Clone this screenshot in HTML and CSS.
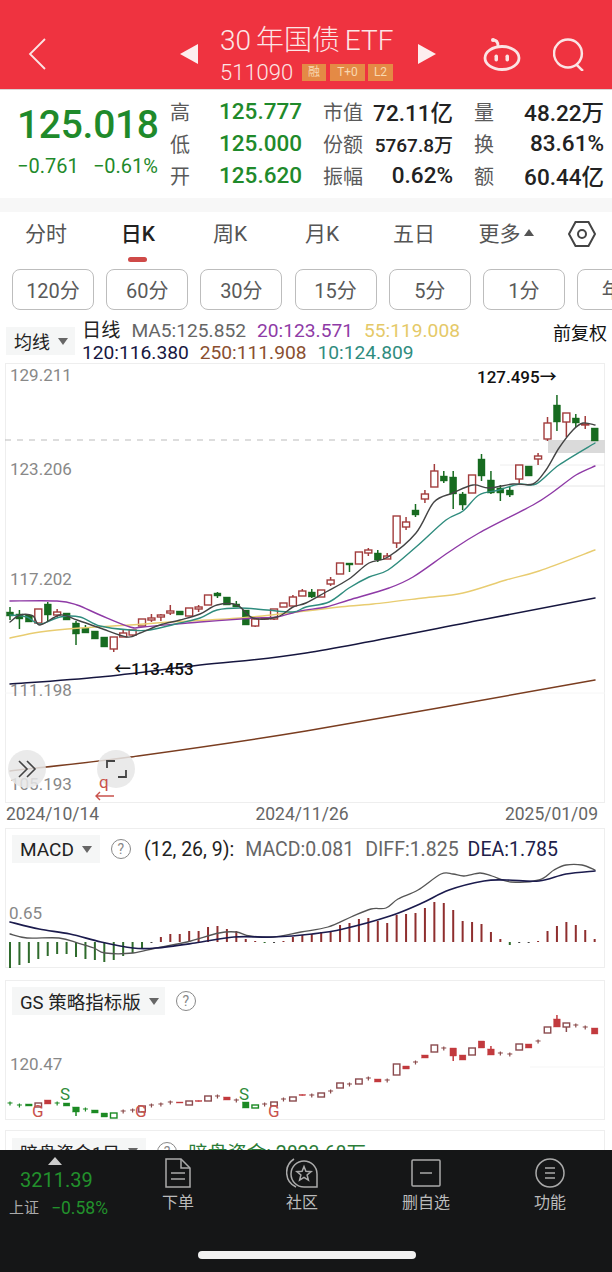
FILE: index.html
```html
<!DOCTYPE html>
<html lang="zh-CN">
<head>
  <meta charset="UTF-8" />
  <meta name="viewport" content="width=device-width, initial-scale=1.0"/>
  <title>30年国债ETF</title>
  <link rel="stylesheet" href="styles.css">
</head>
<body>
  <div class="page">
    <header class="topbar">
      <svg class="back" viewBox="0 0 18 32"><path d="M17 1 2 16l15 15"/></svg>
      <span class="tri tri-left"></span>
      <div class="title-block">
        <div class="title">30 年国债 ETF</div>
        <div class="subtitle">
          <span class="code">511090</span>
          <span class="badge badge-rong">融</span>
          <span class="badge badge-t">T+0</span>
          <span class="badge badge-l">L2</span>
        </div>
      </div>
      <span class="tri tri-right"></span>
      <svg class="robot" viewBox="0 0 38 34">
        <ellipse cx="19" cy="21" rx="17" ry="11.5"/>
        <path d="M15 9c0-4-2-6-5-6"/>
        <circle class="robot-dot" cx="10" cy="3" r="2"/>
        <rect class="robot-dot" x="11.500" y="17.500" width="3.500" height="7" rx="1.700"/>
        <rect class="robot-dot" x="22.500" y="17.500" width="3.500" height="7" rx="1.700"/>
      </svg>
      <svg class="search" viewBox="0 0 32 32"><circle cx="14.500" cy="15" r="13.500"/><path d="m23 26 6 6"/></svg>
    </header>

    <section class="quote">
      <div class="price-block">
        <div class="price">125.018</div>
        <div class="change"><span>−0.761</span><span>−0.61%</span></div>
      </div>
      <div class="stats">
        <div class="stat"><span class="stat-label">高</span><span class="stat-value green">125.777</span></div>
        <div class="stat"><span class="stat-label">市值</span><span class="stat-value">72.11亿</span></div>
        <div class="stat"><span class="stat-label">量</span><span class="stat-value">48.22万</span></div>
        <div class="stat"><span class="stat-label">低</span><span class="stat-value green">125.000</span></div>
        <div class="stat"><span class="stat-label">份额</span><span class="stat-value stat-small">5767.8万</span></div>
        <div class="stat"><span class="stat-label">换</span><span class="stat-value">83.61%</span></div>
        <div class="stat"><span class="stat-label">开</span><span class="stat-value green">125.620</span></div>
        <div class="stat"><span class="stat-label">振幅</span><span class="stat-value">0.62%</span></div>
        <div class="stat"><span class="stat-label">额</span><span class="stat-value">60.44亿</span></div>
      </div>
    </section>

    <nav class="tabs">
      <span class="tab">分时</span>
      <span class="tab active">日K</span>
      <span class="tab">周K</span>
      <span class="tab">月K</span>
      <span class="tab">五日</span>
      <span class="tab">更多<i class="more-arrow"></i></span>
      <span class="tab-setting">
        <svg viewBox="0 0 28 26"><path d="M7.500 1h13L27 13l-6.500 12h-13L1 13z"/><circle cx="14" cy="13" r="4"/></svg>
      </span>
    </nav>

    <div class="chips">
      <span class="chip">120分</span>
      <span class="chip">60分</span>
      <span class="chip">30分</span>
      <span class="chip">15分</span>
      <span class="chip">5分</span>
      <span class="chip">1分</span>
      <span class="chip">年K</span>
    </div>

    <div class="ma-row">
      <span class="tag ma-tag">均线<i class="caret"></i></span>
      <div class="ma-text">
        <div><span class="ma-name">日线</span><span class="ma5">MA5:125.852</span><span class="ma20">20:123.571</span><span class="ma55">55:119.008</span></div>
        <div><span class="ma120">120:116.380</span><span class="ma250">250:111.908</span><span class="ma10">10:124.809</span></div>
      </div>
      <span class="adjust">前复权</span>
    </div>

    <div class="main-chart">
      <svg id="mainChart" viewBox="5 363 600 440"></svg>
    </div>

    <div class="dates">
      <span>2024/10/14</span>
      <span>2024/11/26</span>
      <span>2025/01/09</span>
    </div>

    <section class="panel">
      <svg id="macdChart" class="panel-chart" viewBox="5 828 600 140"></svg>
      <div class="panel-head">
        <span class="tag">MACD<i class="caret"></i></span>
        <span class="help">?</span>
        <span class="macd-params">(12, 26, 9):</span>
        <span class="macd-val">MACD:0.081</span>
        <span class="macd-val">DIFF:1.825</span>
        <span class="macd-dea">DEA:1.785</span>
      </div>
    </section>

    <section class="panel panel-gs">
      <svg id="gsChart" class="panel-chart" viewBox="5 5 600 140"></svg>
      <div class="panel-head">
        <span class="tag tag-gs">GS 策略指标版<i class="caret"></i></span>
        <span class="help">?</span>
      </div>
    </section>

    <section class="panel panel-dark">
      <div class="panel-head">
        <span class="tag tag-dark">暗盘资金1日<i class="caret"></i></span>
        <span class="help">?</span>
        <span class="dark-val">暗盘资金: 2823.68万</span>
      </div>
    </section>

    <footer class="bottombar">
      <div class="index">
        <span class="index-arrow"></span>
        <div class="index-price">3211.39</div>
        <div class="index-line"><span class="index-name">上证</span><span class="index-change">−0.58%</span></div>
      </div>
      <div class="nav-item">
        <svg viewBox="0 0 26 32" width="26" height="32"><path d="M1 2h15l9 9v19H1z"/><path d="M16 2v9h9M6 16h14M6 22h14"/></svg>
        <span>下单</span>
      </div>
      <div class="nav-item">
        <svg viewBox="0 0 32 32" width="32" height="32"><path d="M31 30H18a13 13 0 1 1 13-13z"/><path d="M8 2a16 16 0 0 0 2 28"/><path d="M18 9.500l1.900 4.800 5.200.4-4 3.300 1.300 5.100-4.400-2.800-4.400 2.800 1.300-5.100-4-3.300 5.200-.4z"/></svg>
        <span>社区</span>
      </div>
      <div class="nav-item">
        <svg viewBox="0 0 30 32" width="30" height="32"><rect x="1" y="3" width="28" height="26" rx="1"/><path d="M9 16h12"/></svg>
        <span>删自选</span>
      </div>
      <div class="nav-item">
        <svg viewBox="0 0 30 32" width="30" height="32"><circle cx="15" cy="16" r="14"/><path d="M10 11h10M10 16h10M10 21h10"/></svg>
        <span>功能</span>
      </div>
      <div class="home-pill"></div>
    </footer>
  </div>

  <script src="charts.js"></script>
</body>
</html>
```

FILE: styles.css
```css
* {
  box-sizing: border-box;
}

body {
  margin: 0;
  background: #fff;
  font-family: Roboto, 'Noto Sans CJK SC', sans-serif;
  color: #222;
}

.page {
  position: relative;
  width: 612px;
  height: 1272px;
  overflow: hidden;
}

.green { color: #1f8a2b; }

/* top bar */
.topbar {
  display: flex;
  align-items: center;
  height: 90px;
  padding-top: 19px;
  background: #ef3340;
  border-bottom: 1px solid #d9d5d5;
  color: #fce6e6;
}

.topbar svg {
  flex: none;
  fill: none;
  stroke: #fbe4e4;
}

.back {
  width: 18px;
  height: 32px;
  margin-left: 28px;
  stroke-width: 1.800;
}

.tri {
  flex: none;
  width: 0;
  height: 0;
  border-top: 10px solid transparent;
  border-bottom: 10px solid transparent;
}

.tri-left {
  margin-left: 134px;
  border-right: 18px solid #fdeeee;
}

.tri-right {
  margin-left: 18px;
  border-left: 18px solid #fdeeee;
}

.title-block {
  width: 180px;
  margin-left: 22px;
}

.title {
  font-size: 28px;
  line-height: 36px;
  font-weight: 300;
  white-space: nowrap;
  word-spacing: -2px;
}

.subtitle {
  display: flex;
  align-items: center;
  height: 26px;
}

.code {
  width: 82px;
  font-size: 22px;
  font-weight: 300;
}

.badge {
  height: 17px;
  margin-right: 3px;
  background: #e48a45;
  color: #f8d8b0;
  font-size: 12px;
  line-height: 17px;
  text-align: center;
}

.badge-rong { width: 24px; margin-right: 4px; }
.badge-t { width: 35px; }
.badge-l { width: 25px; }

.robot {
  width: 38px;
  height: 34px;
  margin-left: 47px;
  stroke-width: 2.800;
}

.topbar .robot-dot {
  fill: #fbe4e4;
  stroke: none;
}

.search {
  width: 33px;
  height: 33px;
  margin-left: 32px;
  stroke-width: 2.400;
}

/* quote */
.quote {
  display: flex;
  height: 122px;
  border-bottom: 14px solid #f7f7f7;
}

.price-block {
  width: 170px;
  padding: 12px 12px 0 17px;
  color: #1f8a2b;
}

.price {
  font-size: 39px;
  font-weight: 500;
  line-height: 46px;
  letter-spacing: -0.300px;
}

.change {
  display: flex;
  justify-content: space-between;
  margin-top: 6px;
  font-size: 20px;
  line-height: 24px;
}

.stats {
  display: grid;
  grid-template-columns: 132px 130px 130px;
  grid-auto-rows: 32px;
  column-gap: 21px;
  padding-top: 5px;
}

.stat {
  display: flex;
  justify-content: space-between;
  align-items: center;
  white-space: nowrap;
}

.stat-label {
  font-size: 20px;
  color: #5a5a5a;
}

.stat-value {
  font-size: 22.500px;
  font-weight: 500;
}

.stat-small {
  font-size: 19px;
}

/* tabs */
.tabs {
  display: flex;
  height: 50px;
}

.tab {
  position: relative;
  display: flex;
  align-items: center;
  justify-content: center;
  width: 92px;
  padding-bottom: 10px;
  font-size: 21px;
  color: #555;
}

.tab.active {
  color: #222;
  font-weight: 500;
}

.tab.active::after {
  content: "";
  position: absolute;
  left: 36px;
  bottom: 0;
  width: 19px;
  height: 5px;
  border-radius: 3px;
  background: #cf4a48;
}

.more-arrow {
  width: 0;
  height: 0;
  margin-left: 3px;
  border-left: 5px solid transparent;
  border-right: 5px solid transparent;
  border-bottom: 7px solid #555;
}

.tab-setting {
  display: flex;
  justify-content: center;
  width: 60px;
  padding-top: 9px;
}

.tab-setting svg {
  width: 28px;
  height: 26px;
  fill: none;
  stroke: #444;
  stroke-width: 2;
}

/* period chips */
.chips {
  display: flex;
  gap: 12.200px;
  padding: 7px 0 0 12px;
  height: 48px;
}

.chip {
  flex: none;
  display: flex;
  align-items: center;
  justify-content: center;
  width: 82px;
  height: 41px;
  border: 1px solid #bdbdbd;
  border-radius: 8px;
  font-size: 20px;
  color: #5a5a5a;
}

/* moving average legend */
.ma-row {
  display: flex;
  height: 53px;
  padding: 10px 5px 0 6px;
}

.tag {
  display: inline-flex;
  align-items: center;
  height: 28px;
  padding: 0 8px;
  background: #f5f6f6;
  font-size: 19px;
  color: #222;
  white-space: nowrap;
}

.ma-tag {
  width: 69px;
  margin-top: 7px;
  font-size: 18px;
}

.tag-gs { padding-right: 6px; font-size: 18.500px; }
.tag-dark { font-size: 18px; }

.caret {
  width: 0;
  height: 0;
  margin-left: 8px;
  border-left: 5px solid transparent;
  border-right: 5px solid transparent;
  border-top: 7px solid #666;
}

.ma-text {
  flex: 1;
  margin-left: 7px;
  font-size: 19.200px;
  line-height: 22px;
  white-space: nowrap;
}

.ma-text span {
  margin-right: 11px;
}

.ma-name { color: #222; }
.ma5 { color: #666; }
.ma20 { color: #8e3aa6; }
.ma55 { color: #e5c968; }
.ma120 { color: #16163f; }
.ma250 { color: #8a4f30; }
.ma10 { color: #2f8c7e; }

.adjust {
  margin-top: 3px;
  font-size: 18px;
  line-height: 22px;
  color: #111;
}

/* main chart */
.main-chart {
  width: 600px;
  height: 440px;
  margin-left: 5px;
  border: 1px solid #eee;
}

.main-chart svg {
  display: block;
  width: 600px;
  height: 440px;
  margin: -1px;
}

.dates {
  display: flex;
  justify-content: space-between;
  height: 22px;
  padding: 0 14px 0 6px;
  font-size: 17.500px;
  line-height: 22px;
  color: #666;
}

/* indicator panels */
.panel {
  position: relative;
  width: 600px;
  height: 140px;
  margin: 3px 0 0 5px;
  border: 1px solid #eee;
}

.panel-gs { margin-top: 12px; }
.panel-dark { margin-top: 10px; }

.panel-chart {
  position: absolute;
  left: -1px;
  top: -1px;
  width: 600px;
  height: 140px;
  overflow: visible;
}

.panel-head {
  position: relative;
  display: flex;
  align-items: center;
  gap: 11px;
  padding: 6px 0 0 6px;
  font-size: 19.500px;
  white-space: nowrap;
}

.help {
  flex: none;
  width: 20px;
  height: 20px;
  border: 1px solid #888;
  border-radius: 50%;
  font-size: 14px;
  line-height: 18px;
  text-align: center;
  color: #888;
}

.macd-val { color: #666; }
.macd-dea { color: #20204a; margin-left: -2px; }
.macd-params { margin-left: 2px; }
.dark-val { margin-left: 0; color: #2b7d38; }

.axis-label {
  font-size: 17px;
  fill: #888;
}

.mark-label {
  font-size: 17px;
  font-weight: 500;
  fill: #111;
}

.signal {
  font-size: 17px;
}

/* bottom bar */
.bottombar {
  position: absolute;
  left: 0;
  bottom: 0;
  display: flex;
  width: 612px;
  height: 122px;
  background: #151617;
  color: #bbb;
}

.index {
  position: relative;
  width: 116px;
  padding: 17px 0 0 9px;
}

.index-arrow {
  position: absolute;
  left: 48px;
  top: 7px;
  width: 0;
  height: 0;
  border-left: 7px solid transparent;
  border-right: 7px solid transparent;
  border-bottom: 8px solid #ccc;
}

.index-price {
  margin-left: 11px;
  font-size: 20px;
  line-height: 26px;
  color: #22912c;
}

.index-line {
  display: flex;
  align-items: center;
  margin-top: 3px;
  line-height: 24px;
}

.index-name {
  width: 42px;
  font-size: 15px;
  color: #aaa;
}

.index-change {
  font-size: 17.500px;
  color: #22912c;
}

.nav-item {
  display: flex;
  flex-direction: column;
  align-items: center;
  width: 124px;
  padding-top: 7px;
  font-size: 16px;
  line-height: 24px;
}

.nav-item svg {
  fill: none;
  stroke: #aaa;
  stroke-width: 1.500;
  margin-bottom: 2px;
}

.home-pill {
  position: absolute;
  left: 198px;
  bottom: 13px;
  width: 218px;
  height: 8px;
  border-radius: 4px;
  background: #f1f1f1;
}
```

FILE: charts.js
```js
const RED = "#a23c3c";
const GREEN = "#176b20";
const X0 = 10;
const STEP = 9.43;

const LINE_COLORS = {
  ma5: "#444",
  ma10: "#2f8c7e",
  ma20: "#8e3aa6",
  ma55: "#e8cc70",
  ma120: "#16163f",
  ma250: "#7a3d20"
};

// u = up, d = down: [kind, high, top, bottom, low] in page pixels
const candles = [
  ["d",607,612,616,620],["d",610,614,619,629],["d",615,615,622,622],["u",609,609,623,623],
  ["d",602,604,615,622],["u",609,612,615,617],["d",613,613,620,620],["d",621,623,634,645],
  ["d",625,628,633,633],["d",631,631,639,639],["d",637,637,647,647],["u",637,637,649,652],
  ["u",630,633,637,637],["u",630,630,635,637],["u",619,619,626,626],["u",614,618,620,622],
  ["u",614,615,617,621],["u",605,611,613,615],["d",611,611,615,615],["u",608,608,616,616],
  ["u",605,607,609,612],["u",595,595,605,605],["d",592,593,596,598],["d",597,597,605,605],
  ["d",601,604,607,607],["d",610,610,625,625],["u",619,619,626,627],["u",618,618,619,620],
  ["u",609,609,619,620],["u",603,603,607,607],["u",595,597,606,606],["u",589,591,596,596],
  ["d",589,592,597,598],["u",590,590,597,597],["u",577,580,584,586],["u",563,563,574,574],
  ["d",563,563,565,572],["u",552,552,564,564],["u",548,550,553,556],["d",550,553,560,562],
  ["u",553,556,559,559],["u",516,516,543,548],["u",517,522,527,530],["d",504,510,515,517],
  ["u",490,494,499,503],["u",464,471,487,487],["d",471,476,481,483],["d",471,477,494,509],
  ["d",492,494,505,510],["u",475,475,493,493],["d",454,459,476,481],["d",471,480,493,494],
  ["d",485,488,493,501],["d",487,490,495,497],["u",465,465,479,484],["d",466,466,476,476],
  ["u",453,456,459,465],["u",417,423,439,441],["d",395,405,422,431],["u",413,413,422,437],
  ["d",414,418,423,427],["u",416,424,425,429],["d",428,428,441,441]
];

const mainLines = {
  ma250: "10,771 130,757 306,731 595,680",
  ma120: "10,684 100,677 200,665 306,653 486,619 595,598",
  ma55: "10,638 40,632 80,628 130,625 170,622 240,618 306,611 339,607 373,604 423,598 463,593 506,580 539,571 595,550",
  ma20: "10,601 57,601 77,605 100,615 130,627 143,627 200,622 255,618 277,617 300,611 326,607 349,600 389,588 413,577 449,552 479,533 533,505 553,492 576,475 595,466",
  ma10: "10,615 27,617 40,624 60,617 80,617 100,626 130,630 150,630 180,623 200,618 217,610 240,608 267,610 293,612 306,607 329,602 349,588 369,577 388,570 416,547 446,520 463,511 479,495 499,490 519,484 536,484 559,465 595,443",
  ma5: "10,622 20,615 33,616 40,625 60,615 77,620 100,628 127,637 140,633 160,625 180,620 200,614 217,605 237,605 253,618 277,617 293,607 306,603 326,592 349,579 369,563 388,557 416,533 434,502 453,493 473,485 489,488 513,484 533,484 546,470 559,448 573,430 583,423 595,425"
};

const macdBars = [
  -26,-23,-21,-17,-14,-12,-12,-15,-17,-18,-20,-18,-14,-11,-6,0,
  5,8,8,11,11,15,16,13,11,3,1,-1,0,1,5,7,8,10,11,17,19,23,24,21,19,27,28,29,34,40,
  39,32,21,20,18,10,3,-3,0,0,1,11,16,20,17,12,3
];
const macdDiff = "10,934 27,938 59,938 78,943 94,948 105,953 133,953 156,948 187,942 219,933 236,932 250,936 273,937 301,932 328,927 351,917 371,909 386,908 398,899 418,890 441,874 453,874 464,876 480,873 492,876 511,882 539,880 554,870 566,865 582,865 595,870";
const macdDea = "10,922 39,929 70,934 101,942 133,948 156,948 195,943 234,937 273,937 312,934 343,929 390,916 422,903 449,890 484,881 507,880 539,881 566,874 595,871";

// y is relative to 975. u hollow red, r filled red, d filled green, h hollow green,
// p / q small crosses: [kind, top, bottom, high, low]
const gsCandles = [
  ["q",128],["q",130],["d",129,131],["u",128,132],["r",125,129],["q",128],["d",128,131],["d",132,137,132,141],
  ["q",134],["d",135,138],["d",138,142],["h",138,143],["p",136],["p",135],["u",131,137],["p",130],
  ["p",129],["p",127],["r",127,128],["u",126,130],["r",125.5,126.5],["u",121,126],["p",121],["r",122,125],
  ["p",125],["d",127,133],["h",130,133],["p",129],["u",127,131],["p",124],["u",122,126],["r",119.5,120.5],
  ["p",120],["u",118,122],["p",116],["u",108,113],["p",109],["u",104,109],["p",103],["r",104,107],
  ["p",105],["u",89,100],["r",91,94],["p",87],["r",80,83],["u",70,77],["p",73],["r",73,81,73,86],
  ["r",80,85],["u",73,80],["r",66,73],["r",74,80,71,80],["p",78],["p",79],["u",69,75],["r",69,73],
  ["p",66],["u",52,58],["r",44,52,40,52],["u",48,52,48,57],["p",50],["p",52],["r",53,59]
];

function xAt(i) {
  return X0 + i * STEP;
}

// smooth line through the points (catmull-rom to bezier)
function smoothLine(points, color, width) {
  const p = points.split(" ").map(s => s.split(",").map(Number));
  let d = `M${p[0][0]} ${p[0][1]}`;
  for (let i = 0; i < p.length - 1; i++) {
    const a = p[i - 1] || p[i];
    const b = p[i];
    const c = p[i + 1];
    const e = p[i + 2] || c;
    const c1x = b[0] + (c[0] - a[0]) / 6;
    const c1y = b[1] + (c[1] - a[1]) / 6;
    const c2x = c[0] - (e[0] - b[0]) / 6;
    const c2y = c[1] - (e[1] - b[1]) / 6;
    d += `C${c1x} ${c1y} ${c2x} ${c2y} ${c[0]} ${c[1]}`;
  }
  return `<path d="${d}" fill="none" stroke="${color}" stroke-width="${width}" stroke-linecap="round"/>`;
}

function candleSvg(x, top, bottom, high, low, color, hollow, w) {
  const h = Math.max(bottom - top, 1);
  return `<line x1="${x}" x2="${x}" y1="${high}" y2="${low}" stroke="${color}" stroke-width="1.500"/>
    <rect x="${x - w / 2}" y="${top}" width="${w}" height="${h}" fill="${hollow ? "#fff" : color}" stroke="${color}" stroke-width="${hollow ? 1.4 : 0.4}"/>`;
}

function drawMain() {
  let out = `
    <line x1="500" x2="605" y1="465" y2="465" stroke="#eee"/>
    <line x1="500" x2="605" y1="486" y2="486" stroke="#e6e6e6"/>
    <line x1="5" x2="605" y1="693" y2="693" stroke="#f6f6f6"/>
    <rect x="548" y="440" width="57" height="13" fill="#dadada"/>
    <line x1="5" x2="548" y1="440" y2="440" stroke="#bbb" stroke-dasharray="6 6"/>`;

  out += `<text class="axis-label" x="10" y="381">129.211</text>
    <text class="axis-label" x="10" y="475">123.206</text>
    <text class="axis-label" x="10" y="585">117.202</text>
    <text class="axis-label" x="10" y="696">111.198</text>
    <text class="axis-label" x="10" y="790">105.193</text>`;

  candles.forEach((c, i) => {
    const isUp = c[0] === "u";
    out += candleSvg(xAt(i), c[2], c[3], c[1], c[4], isUp ? RED : GREEN, isUp, 7);
  });

  Object.keys(mainLines).forEach(name => {
    const width = name === "ma120" || name === "ma250" ? 1.500 : 1.400;
    out += smoothLine(mainLines[name], LINE_COLORS[name], width);
  });

  out += `<text class="mark-label" x="477" y="383">127.495→</text>
    <text class="mark-label" x="114" y="675">←113.453</text>
    <circle cx="27" cy="769" r="19" fill="#e6e6e6" fill-opacity="0.85"/>
    <circle cx="116" cy="769" r="19" fill="#e6e6e6" fill-opacity="0.85"/>
    <path d="M19 761l8 8-8 8M27 761l8 8-8 8" fill="none" stroke="#444" stroke-width="1.600"/>
    <path d="M107 768v-7h8M126 770v7h-8" fill="none" stroke="#444" stroke-width="1.800"/>
    <text class="signal" x="99" y="788" fill="#c9524c">q</text>
    <path d="M114 796H96m4-4-4 4 4 4" fill="none" stroke="#c9524c" stroke-width="1.400"/>`;

  document.getElementById("mainChart").innerHTML = out;
}

function drawMacd() {
  const zero = 942;
  let out = `<text class="axis-label" x="9" y="919">0.65</text>`;
  macdBars.forEach((v, i) => {
    const x = xAt(i);
    const color = v < 0 ? "#2f6b2c" : "#8f2f2f";
    const height = v === 0 ? 1 : Math.abs(v);
    const y = v < 0 || v === 0 ? zero : zero - v;
    out += `<rect x="${x - 1}" y="${y}" width="2" height="${height}" fill="${v === 0 ? "#444" : color}"/>`;
  });
  out += smoothLine(macdDiff, "#555", 1.300);
  out += smoothLine(macdDea, "#1b1b4d", 1.700);
  document.getElementById("macdChart").innerHTML = out;
}

function drawGs() {
  const red = "#c23a3e";
  const green = "#1c8a24";
  let out = `<line x1="530" x2="605" y1="92" y2="92" stroke="#f5f5f5"/>
    <text class="axis-label" x="10" y="95">120.47</text>`;

  gsCandles.forEach((c, i) => {
    const x = xAt(i);
    const kind = c[0];
    if (kind === "p" || kind === "q") {
      const color = kind === "p" ? "#8a4a4a" : green;
      out += `<path d="M${x - 2.500} ${c[1]}h5M${x} ${c[1] - 1.500}v4" stroke="${color}" stroke-width="1.200"/>`;
      return;
    }
    const color = kind === "u" ? "#8a4a4e" : kind === "r" ? red : green;
    const high = c[3] === undefined ? c[1] : c[3];
    const low = c[4] === undefined ? c[2] : c[4];
    out += candleSvg(x, c[1], c[2], high, low, kind === "h" ? green : color, kind === "u" || kind === "h", 6.500);
  });

  out += `<text class="signal" x="60" y="125" fill="#2f8c3a">S</text>
    <text class="signal" x="239" y="125" fill="#2f8c3a">S</text>
    <text class="signal" x="32" y="142" fill="#c9524c">G</text>
    <text class="signal" x="135" y="142" fill="#c9524c">G</text>
    <text class="signal" x="268" y="142" fill="#c9524c">G</text>`;

  document.getElementById("gsChart").innerHTML = out;
}

drawMain();
drawMacd();
drawGs();
```
